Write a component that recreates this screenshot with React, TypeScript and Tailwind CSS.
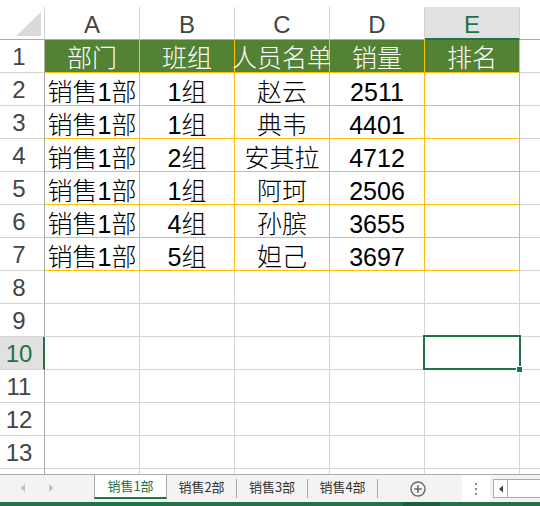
import React from "react";

const header = ["部门", "班组", "人员名单", "销量", "排名"];
const data = [
  ["销售1部", "1组", "赵云", "2511", ""],
  ["销售1部", "1组", "典韦", "4401", ""],
  ["销售1部", "2组", "安其拉", "4712", ""],
  ["销售1部", "1组", "阿珂", "2506", ""],
  ["销售1部", "4组", "孙膑", "3655", ""],
  ["销售1部", "5组", "妲己", "3697", ""],
];
const letters = ["A", "B", "C", "D", "E"];

function RowHeader({ n, active }: { n: number; active?: boolean }) {
  return (
    <div
      className={
        active
          ? "w-[45px] shrink-0 h-[33px] border-b border-b-[#d4d4d4] border-r-2 border-r-[#217346] bg-[#e1e1e1] text-[#217346] text-center pr-[5px] text-[24px] leading-[32px] pt-[1px]"
          : "w-[45px] shrink-0 h-[33px] border-b border-b-[#d4d4d4] border-r border-r-[#ababab] text-[#444] text-center pr-[6px] text-[24px] leading-[32px] pt-[1px]"
      }
    >
      {n}
    </div>
  );
}

function GoldCell({ text, head }: { text: string; head?: boolean }) {
  return (
    <div
      className={
        head
          ? "w-[95px] shrink-0 h-[33px] border-r border-b border-[#ffc000] bg-[#548235] text-white font-light flex justify-center whitespace-nowrap text-[25px] leading-[32px] pt-[2px]"
          : "w-[95px] shrink-0 h-[33px] border-r border-b border-[#ffc000] text-black font-light flex justify-center whitespace-nowrap text-[25px] leading-[32px] pt-[3px]"
      }
    >
      {text}
    </div>
  );
}

function GreyCell() {
  return <div className="w-[95px] shrink-0 h-[33px] border-r border-b border-[#d4d4d4]" />;
}

function Tail() {
  return <div className="flex-1 h-[33px] border-b border-[#d4d4d4]" />;
}

export default function App() {
  return (
    <div className="w-[540px] h-[506px] overflow-hidden bg-white flex flex-col font-['Liberation_Sans','Noto_Sans_CJK_SC',sans-serif]">
      <div className="h-[7px] shrink-0" />
      <div className="relative flex flex-col shrink-0">
        {/* column header */}
        <div className="flex h-[33px]">
          <div className="w-[45px] shrink-0 h-[33px] border-r border-r-[#d4d4d4] border-b border-b-[#ababab] relative">
            <svg className="absolute left-0 top-0" width="45" height="32" viewBox="0 0 45 32">
              <polygon points="16,29 41,29 41,5" fill="#dadada" />
            </svg>
          </div>
          {letters.map((l) =>
            l === "E" ? (
              <div
                key={l}
                className="w-[95px] shrink-0 h-[33px] bg-[#e1e1e1] border-b-2 border-b-[#217346] border-r border-r-[#d4d4d4] text-[#217346] text-center text-[24px] leading-[31px] pt-[2px]"
              >
                {l}
              </div>
            ) : (
              <div
                key={l}
                className="w-[95px] shrink-0 h-[33px] border-b border-b-[#ababab] border-r border-r-[#d4d4d4] text-[#444] text-center text-[24px] leading-[32px] pt-[2px]"
              >
                {l}
              </div>
            )
          )}
          <div className="flex-1 h-[33px] border-b border-b-[#ababab]" />
        </div>
        {/* row 1 */}
        <div className="flex h-[33px]">
          <RowHeader n={1} />
          {header.map((h, i) => (
            <GoldCell key={i} text={h} head />
          ))}
          <Tail />
        </div>
        {data.map((r, ri) => (
          <div key={ri} className="flex h-[33px]">
            <RowHeader n={ri + 2} />
            {r.map((c, ci) => (
              <GoldCell key={ci} text={c} />
            ))}
            <Tail />
          </div>
        ))}
        {[8, 9, 10, 11, 12, 13].map((n) => (
          <div key={n} className="flex h-[33px]">
            <RowHeader n={n} active={n === 10} />
            <GreyCell />
            <GreyCell />
            <GreyCell />
            <GreyCell />
            <GreyCell />
            <Tail />
          </div>
        ))}
        <div className="flex h-[5px]">
          <div className="w-[45px] shrink-0 border-r border-r-[#ababab]" />
          <div className="w-[95px] shrink-0 border-r border-[#d4d4d4]" />
          <div className="w-[95px] shrink-0 border-r border-[#d4d4d4]" />
          <div className="w-[95px] shrink-0 border-r border-[#d4d4d4]" />
          <div className="w-[95px] shrink-0 border-r border-[#d4d4d4]" />
          <div className="w-[95px] shrink-0 border-r border-[#d4d4d4]" />
          <div className="flex-1" />
        </div>
        {/* selection */}
        <div className="absolute left-[423px] top-[328px] w-[98px] h-[35px] border-2 border-[#217346]" />
        <div className="absolute left-[516px] top-[359px] w-[7px] h-[7px] bg-[#217346] border border-white" />
      </div>

      {/* sheet tabs */}
      <div className="h-[28px] shrink-0 border-t border-[#ababab] bg-[#f3f3f3] flex items-stretch font-['Noto_Sans_CJK_SC','Noto_Sans',sans-serif] text-[13px]">
        <div className="w-[94px] shrink-0 relative">
          <svg className="absolute left-0 top-0" width="94" height="27" viewBox="0 0 94 27">
            <polygon points="25,9 25,17 20.5,13" fill="#c2c2c2" />
            <polygon points="49,9 49,17 53.5,13" fill="#c2c2c2" />
          </svg>
        </div>
        <div className="w-[73px] shrink-0 mb-[3px] bg-white border-x border-x-[#ababab] border-b-2 border-b-[#217346] text-[#217346] flex items-center justify-center">
          销售1部
        </div>
        <div className="w-[69px] shrink-0 mb-[3px] flex items-center justify-center text-[#333]">销售2部</div>
        <div className="w-px shrink-0 h-[19px] self-center bg-[#ababab]" />
        <div className="w-[70px] shrink-0 mb-[3px] flex items-center justify-center text-[#333]">销售3部</div>
        <div className="w-px shrink-0 h-[19px] self-center bg-[#ababab]" />
        <div className="w-[69px] shrink-0 mb-[3px] flex items-center justify-center text-[#333]">销售4部</div>
        <div className="w-px shrink-0 h-[19px] self-center bg-[#ababab]" />
        <div className="w-[84px] shrink-0 flex items-center pl-[32px]">
          <svg width="16" height="16" viewBox="0 0 16 16">
            <circle cx="8" cy="8" r="7" fill="none" stroke="#6a6a6a" strokeWidth="1.4" />
            <path d="M8 4.2 V11.8 M4.2 8 H11.8" stroke="#6a6a6a" strokeWidth="1.6" />
          </svg>
        </div>
        <div className="w-[28px] shrink-0 bg-white flex flex-col items-center justify-center gap-[3px]">
          <div className="w-[2px] h-[2px] bg-[#8a8a8a]" />
          <div className="w-[2px] h-[2px] bg-[#8a8a8a]" />
          <div className="w-[2px] h-[2px] bg-[#8a8a8a]" />
        </div>
        <div className="flex-1 flex items-center pl-[3px]">
          <div className="flex-1 h-[19px] bg-white border border-[#ababab] border-r-0 flex">
            <div className="w-[14px] border-r border-[#ababab] flex items-center justify-center">
              <svg width="6" height="8" viewBox="0 0 6 8">
                <polygon points="5,0.5 5,7.5 1,4" fill="#444" />
              </svg>
            </div>
          </div>
        </div>
      </div>
      <div className="h-[4px] shrink-0 bg-[#217346] flex">
        <div className="w-[403px]" />
        <div className="w-[37px] bg-[#1b5e3a]" />
      </div>
    </div>
  );
}
